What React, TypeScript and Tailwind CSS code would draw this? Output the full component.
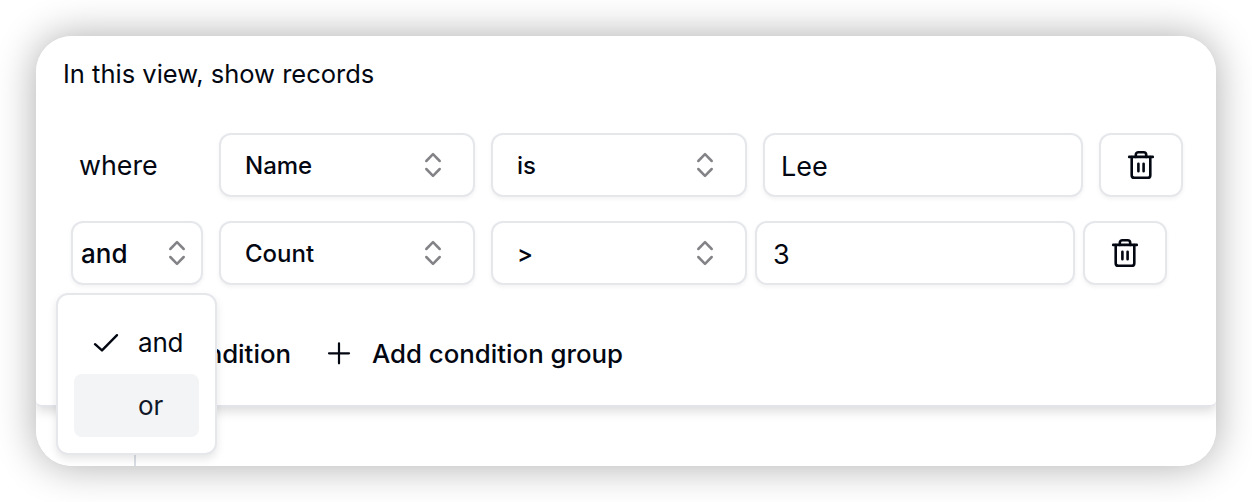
import type { ReactNode } from "react";

const control =
  "flex h-16 shrink-0 items-center rounded-xl border-2 border-[#e5e7eb] bg-white shadow-[0_2px_4px_rgba(0,0,0,0.05)]";

function SortCaret() {
  return (
    <svg
      width="32"
      height="32"
      viewBox="0 0 32 32"
      fill="none"
      stroke="#838387"
      strokeWidth="2.5"
      strokeLinecap="round"
      strokeLinejoin="round"
    >
      <path d="M9.3 12 L16 5.2 L22.7 12" />
      <path d="M9.3 20 L16 26.8 L22.7 20" />
    </svg>
  );
}

function TrashButton() {
  return (
    <button className={`${control} w-[84px] justify-center`} aria-label="Remove condition">
      <svg width="32" height="32" viewBox="0 0 32 32" fill="none" stroke="#030712" strokeWidth="2.6" strokeLinecap="round" strokeLinejoin="round">
        <path d="M4.2 7.9H27.8" />
        <path d="M10.8 7.9V5.8a2.6 2.6 0 0 1 2.6-2.6h5.2a2.6 2.6 0 0 1 2.6 2.6v2.1" />
        <path d="M6.7 8V26.2a2.6 2.6 0 0 0 2.6 2.6H22.7a2.6 2.6 0 0 0 2.6-2.6V8" />
        <path d="M13.4 14.8V22.2M18.6 14.8V22.2" />
      </svg>
    </button>
  );
}

function Select({ children }: { children: ReactNode }) {
  return (
    <button className={`${control} w-64 justify-between pr-6 pl-6 text-[24px] font-medium`}>
      <span className="pt-0.5">{children}</span>
      <SortCaret />
    </button>
  );
}

function Field({ value }: { value: string }) {
  return (
    <div className={`${control} w-80 px-4 text-[27px]`}>
      <span className="pt-0.5">{value}</span>
    </div>
  );
}

export default function App() {
  return (
    <div className="h-[502px] w-[1252px] overflow-hidden bg-white p-9 font-['Inter',sans-serif] leading-none text-[#030712]">
      <div className="h-[430px] w-[1180px] rounded-[36px] shadow-[0_0_40px_rgba(0,0,0,0.33)]">
        <div className="relative h-full overflow-hidden rounded-[36px] bg-white">
          <section className="h-[371px] rounded-b-md border-b-2 border-[#e2e4e9] shadow-[0_4px_12px_rgba(0,0,0,0.15)]">
            <h1 className="h-[97px] pt-[25px] pl-[27px] text-[25.5px]">In this view, show records</h1>
            <div className="flex gap-4 pl-[35px]">
              <div className="flex h-16 w-[132px] items-center pl-2 text-[26.8px]">where</div>
              <Select>Name</Select>
              <Select>is</Select>
              <Field value="Lee" />
              <TrashButton />
            </div>
            <div className="mt-6 flex gap-4 pl-[35px]">
              <button className={`${control} w-[132px] justify-between pr-2 pl-2 text-[26px] font-medium`}>
                <span className="pt-0.5">and</span>
                <SortCaret />
              </button>
              <Select>Count</Select>
              <div className="flex gap-2">
                <Select>&gt;</Select>
                <Field value="3" />
                <TrashButton />
              </div>
            </div>
            <div className="mt-[52px] flex items-center text-[25.8px] font-medium">
              <span className="w-[255px] pt-0.5 text-right whitespace-nowrap">Add condition</span>
              <svg className="ml-9" width="24" height="32" viewBox="0 0 24 32" stroke="#030712" strokeWidth="2.2" strokeLinecap="round">
                <path d="M12 6.3V26.3M2 16.3H22" />
              </svg>
              <span className="ml-[21px] pt-0.5">Add condition group</span>
            </div>
          </section>
          <div className="ml-[98px] h-[59px] w-0.5 bg-[#d9dee5]" />
          <div className="absolute top-[257px] left-5 h-[162px] w-[161px] rounded-xl border-2 border-[#e5e7eb] bg-white px-4 pt-4 text-[26px] tracking-[-0.2px] shadow-[0_4px_8px_rgba(0,0,0,0.1)]">
            <div className="flex h-[63px] items-center pl-4">
              <svg width="32" height="32" viewBox="0 0 32 32" fill="none" stroke="#030712" strokeWidth="2.4" strokeLinecap="round" strokeLinejoin="round">
                <path d="M5 17.2L12 23.4L27 8.2" />
              </svg>
              <span className="ml-4 pt-px">and</span>
            </div>
            <div className="flex h-[63px] items-center rounded-lg bg-[#f3f4f6] pt-px pl-16 text-[#111827]">or</div>
          </div>
        </div>
      </div>
    </div>
  );
}
